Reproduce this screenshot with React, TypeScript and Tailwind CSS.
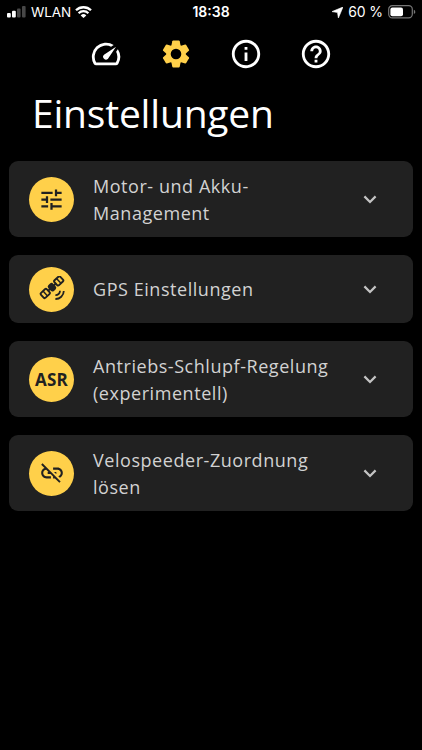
import type { ReactNode } from "react";
import { MdHelpOutline, MdInfoOutline, MdLinkOff, MdSpeed, MdTune } from "react-icons/md";

interface Setting {
  id: string;
  lines: string[];
  icon: ReactNode;
}

const TEETH = [0, 60, 120, 180, 240, 300];

function GearIcon() {
  return (
    <svg viewBox="-17 -17 34 34" className="size-[34px] text-[#ffd04a]" fill="currentColor">
      <circle r="7.5" fill="none" stroke="currentColor" strokeWidth="4.4" />
      {TEETH.map((angle) => (
        <path
          key={angle}
          d="M-4.8-7.6-3.7-12.7q.2-.7.9-.7h5.6q.7 0 .9.7L4.8-7.6z"
          transform={`rotate(${angle})`}
        />
      ))}
    </svg>
  );
}

function SatelliteIcon() {
  return (
    <svg viewBox="0 0 26 26" className="w-[26px] h-[26px]" fill="none" stroke="currentColor" strokeWidth="1.9">
      <g transform="translate(13 11.2) rotate(-43)">
        <rect x="-13.2" y="-3.3" width="8" height="6.6" rx="1.4" />
        <path d="M-9.2-3.3v6.6" strokeWidth="1.5" />
        <rect x="5.2" y="-3.3" width="8" height="6.6" rx="1.4" />
        <path d="M9.2-3.3v6.6" strokeWidth="1.5" />
        <path d="M-5.6 0H5.6" />
        <rect x="-3.3" y="-4" width="6.6" height="8" rx="2.2" fill="currentColor" stroke="none" />
      </g>
      <path d="M16.4 19.2a4.4 4.4 0 0 0 4.6-4.4M16.4 23a8.2 8.2 0 0 0 8.4-8" strokeWidth="1.8" />
    </svg>
  );
}

const SETTINGS: Setting[] = [
  { id: "motor", lines: ["Motor- und Akku-", "Management"], icon: <MdTune className="w-[27px] h-[27px]" /> },
  { id: "gps", lines: ["GPS Einstellungen"], icon: <SatelliteIcon /> },
  {
    id: "asr",
    lines: ["Antriebs-Schlupf-Regelung", "(experimentell)"],
    icon: <span className="pt-px text-[17px] font-bold tracking-[0.3px]">ASR</span>,
  },
  { id: "unlink", lines: ["Velospeeder-Zuordnung", "lösen"], icon: <MdLinkOff className="w-[26px] h-[26px]" /> },
];

function StatusBar() {
  return (
    <div className="relative flex h-6 items-center justify-between pl-[7px] pr-[6px] font-['Inter',sans-serif] text-[14px] leading-none">
      <div className="flex items-center">
        <svg viewBox="0 0 19 12" className="mr-[5px] h-3 w-[19px]" fill="#fff">
          <rect x="0" y="7" width="3.8" height="4.6" rx="1" />
          <rect x="5" y="4.8" width="3.8" height="6.8" rx="1" />
          <rect x="10" y="2.4" width="3.6" height="9.2" rx="1" opacity=".28" />
          <rect x="15" y="0" width="3.6" height="11.6" rx="1" opacity=".28" />
        </svg>
        <span className="w-10 pt-px text-[13.5px] tracking-[-0.1px]">WLAN</span>
        <svg viewBox="0 0 17 12" className="ml-1 h-3 w-[17px]" fill="none" stroke="#fff" strokeWidth="2.3">
          <path d="M1 4.3a10.7 10.7 0 0 1 15 0M3.6 7.2a7 7 0 0 1 9.8 0" />
          <path d="M8.5 12 5.7 9.4a4 4 0 0 1 5.6 0z" fill="#fff" stroke="none" />
        </svg>
      </div>
      <span className="absolute left-1/2 -translate-x-1/2 text-[14px] font-semibold">18:38</span>
      <div className="flex items-center">
        <svg viewBox="0 0 11 11" className="mr-[5px] h-[11px] w-[11px]" fill="#fff">
          <path d="M11 0 6.4 11 5.5 5.5 0 4.6z" stroke="#fff" strokeWidth=".6" />
        </svg>
        <span className="mr-[5px] text-[14px] tracking-[-0.1px]">60 %</span>
        <svg viewBox="0 0 28 14" className="h-[14px] w-7">
          <rect x=".7" y=".7" width="23.6" height="12.2" rx="3.6" fill="none" stroke="#777" strokeWidth="1.2" />
          <rect x="2.4" y="2.4" width="12.6" height="8.8" rx="2" fill="#fff" />
          <path d="M25.8 4.8v4.2a2.2 2.2 0 0 0 0-4.2z" fill="#777" />
        </svg>
      </div>
    </div>
  );
}

function SettingCard({ setting }: { setting: Setting }) {
  return (
    <button
      className={`flex w-full items-center rounded-[9px] bg-[#212121] pl-5 pr-[31px] text-left ${
        setting.lines.length > 1 ? "h-[76px]" : "h-[68px]"
      }`}
    >
      <span className="flex size-[45px] shrink-0 items-center justify-center rounded-full bg-[#ffd04a] text-[#212121]">
        {setting.icon}
      </span>
      <span className="ml-[19px] flex-1 pt-px text-[18px] leading-[27px] tracking-[0.55px] text-[#d2d2d2]">
        {setting.lines.map((line) => (
          <span key={line} className="block whitespace-nowrap">
            {line}
          </span>
        ))}
      </span>
      <svg viewBox="0 0 24 24" className="size-6 shrink-0" fill="none" stroke="#c4c4c4" strokeWidth="2.2">
        <path d="m6.4 9.4 5.6 5.6 5.6-5.6" />
      </svg>
    </button>
  );
}

export default function App() {
  return (
    <div className="min-h-[750px] bg-black font-['Open_Sans',sans-serif] text-white">
      <StatusBar />

      {/* Navigation */}
      <nav className="flex h-[60px] items-center justify-center gap-[35.7px]">
        <MdSpeed className="size-[34px]" />
        <GearIcon />
        <MdInfoOutline className="size-[34px]" />
        <MdHelpOutline className="size-[34px]" />
      </nav>

      <h1 className="ml-8 mt-[2px] h-[75px] text-[39px] leading-[54px] tracking-[-0.2px]">Einstellungen</h1>

      {/* Settings */}
      <div className="flex flex-col gap-[18px] pl-[9px] pr-[9.5px]">
        {SETTINGS.map((s) => (
          <SettingCard key={s.id} setting={s} />
        ))}
      </div>
    </div>
  );
}
